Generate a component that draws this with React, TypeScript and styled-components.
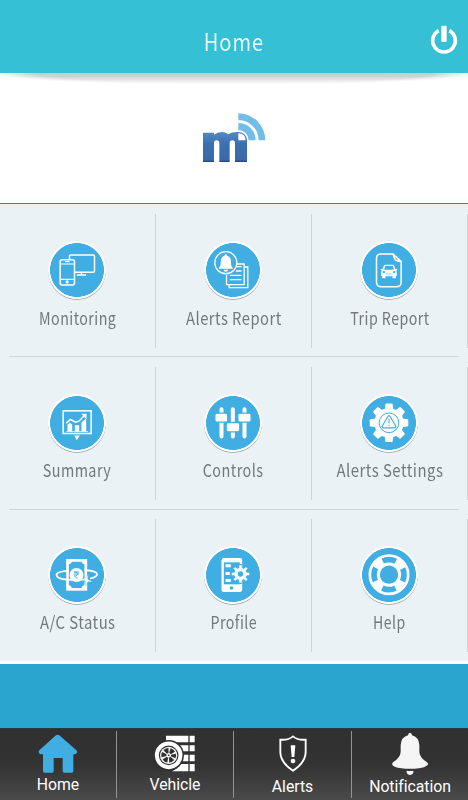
import React from 'react';
import styled, { createGlobalStyle } from 'styled-components';

const GlobalStyle = createGlobalStyle`
  * { box-sizing: border-box; }
  body { margin: 0; background: #fff; }
`;

const labelFont = '"Noto Sans CJK JP", "Noto Sans", sans-serif';

const Screen = styled.div`
  width: 468px;
  height: 800px;
  display: flex;
  flex-direction: column;
  overflow: hidden;
  background: #fff;
`;

const Header = styled.header`
  flex: 0 0 73px;
  display: grid;
  grid-template-columns: 60px 1fr 60px;
  align-items: center;
  background: #35c0d6;
`;

const Title = styled.h1`
  grid-column: 2;
  margin: 8px 0 0;
  text-align: center;
  font: 350 24.5px/30px ${labelFont};
  letter-spacing: 1.2px;
  transform: scaleX(0.825);
  color: #f4feff;
`;

const PowerButton = styled.button`
  margin: 7px 0 0 20px;
  padding: 0;
  width: 32px;
  height: 32px;
  border: 0;
  background: none;
`;

const Brand = styled.section`
  flex: 0 0 131px;
  display: flex;
  flex-direction: column;
  align-items: center;
  border-bottom: 1px solid #4f7991;
`;

const HeaderShade = styled.div`
  width: 100%;
  height: 12px;
  margin-bottom: 27px;
  background: linear-gradient(#c9c9c9 0%, #d2d2d2 30%, #ededed 65%, #fff 100%);
  mask-image: radial-gradient(ellipse 50% 100% at 50% 0, #000 85%, transparent 103%);
`;

const BrandSvg = styled.svg`
  flex: none;
  margin-left: 2px;
`;

const Grid = styled.main`
  flex: 0 0 457px;
  display: grid;
  grid-template-columns: repeat(3, 156px);
  grid-template-rows: 153px 152px 152px;
  background: #eaf2f6;
  background-image: linear-gradient(#cfd7d9, #cfd7d9), linear-gradient(#cfd7d9, #cfd7d9);
  background-size: 450px 1px, 450px 1px;
  background-position: 9px 152px, 9px 305px;
  background-repeat: no-repeat;
`;

const Disc = styled.span`
  display: flex;
  flex: 0 0 60px;
  width: 60px;
  height: 60px;
  margin-right: 1px;
  border-radius: 50%;
  background: radial-gradient(circle at center, #40aee3 26.6px, #fff 27.2px, #fff 28.5px, transparent 29.2px);
  filter: drop-shadow(0 1px 0.6px #a2a8acd0);
`;

const TileLabel = styled.span<{ $stretch: number }>`
  margin-top: 3px;
  font: 400 17.6px/28px ${labelFont};
  letter-spacing: 0.55px;
  transform: scaleX(${(p) => p.$stretch});
  white-space: nowrap;
  color: #74787a;
`;

const Tile = styled.button`
  display: flex;
  flex-direction: column;
  align-items: center;
  margin: 10px 0 9px;
  padding: 26px 0 0;
  border: 0;
  border-right: 1px solid #cbd3d5;
  background: none;
  &:nth-child(-n + 3) ${TileLabel} { margin-top: 4px; }
`;

const Banner = styled.div`
  flex: 0 0 67px;
  border-top: 3px solid #fbfdfe;
  background: #29a5d0;
`;

const Nav = styled.nav`
  flex: 0 0 72px;
  display: grid;
  grid-template-columns: 117px 117px 118px 116px;
  padding-top: 2px;
  border-top: 1px solid #253c45;
  background: linear-gradient(#303030 0%, #333 50%, #4a4a4a 100%);
`;

const NavItem = styled.a`
  display: flex;
  flex-direction: column;
  align-items: center;
  height: 67px;
  border-right: 1px solid #939393;
  &:last-child { border-right: 0; }
`;

const NavSvg = styled.svg`
  flex: 0 0 45px;
`;

const NavLabel = styled.span<{ $lower?: boolean }>`
  margin-top: ${(p) => (p.$lower ? 1 : -1)}px;
  font: 400 15.8px/20px Roboto, sans-serif;
  letter-spacing: -0.05px;
  color: #fff;
`;

const gearPath = (cx: number, cy: number, outer: number, inner: number, tip: number, root: number) => {
  const points: string[] = [];
  for (let i = 0; i < 8; i++) {
    const a = (i * Math.PI) / 4 - Math.PI / 2;
    for (const [r, d] of [[inner, -root], [outer, -tip], [outer, tip], [inner, root]]) {
      points.push(`${(cx + r * Math.cos(a + d)).toFixed(2)},${(cy + r * Math.sin(a + d)).toFixed(2)}`);
    }
  }
  return `M${points.join('L')}Z`;
};

const BLUE = '#40aee3';

const bell = 'M138 74c-3 0-4 2-4 4-8 2-11 9-11 16 0 12-2 17-6 21v2h42v-2c-4-4-6-9-6-21 0-7-3-14-11-16 0-2-1-4-4-4Z';

const Monitoring = () => (
  <g fill="none" stroke="#fff" strokeWidth="4.4">
    <path d="M119 88V80q0-4 4-4h67q4 0 4 4v44q0 4-4 4h-55" />
    <path d="M155 129v6M141 136h28" />
    <rect x="91" y="90" width="43" height="76" rx="6" />
    <path d="M92 103h41M92 149h41M106 96h13" strokeWidth="3.4" />
    <path d="M112 152v10M107 157h10" strokeWidth="4" />
  </g>
);

const AlertsReport = () => (
  <g fill="none" stroke="#fff" strokeWidth="3.9">
    <path d="M148 165v9h56v-62h-9" />
    <path d="M169 103h24v62h-53v-30" />
    <path d="M165 111h20M168 124h17M150 137h35M150 150h35" />
    <circle cx="138" cy="99" r="33" fill={BLUE} />
    <path d={bell} fill="#fff" stroke="none" />
    <path d="M131 120h14q-1 6-7 6t-7-6Z" fill="#fff" stroke="none" />
  </g>
);

const TripReport = () => (
  <g>
    <path d="M190 73h-37q-13 0-13 13v72q0 13 13 13h48q13 0 13-13V96ZM190 73q3 13 7 18 7 4 17 5" fill="none" stroke="#fff" strokeWidth="4.6" strokeLinejoin="round" />
    <path fillRule="evenodd" fill="#fff" d="M162 108q1-3 5-3h21q4 0 5 3l4 11 4-2 2 3-4 3q2 2 2 5v11h-3v7h-10v-6h-21v6h-10v-7h-3v-11q0-3 2-5l-4-3 2-3 4 2ZM166 109l-3 11h29l-3-11ZM158 127a4 3 0 1 0 8 0 4 3 0 1 0-8 0M189 127a4 3 0 1 0 8 0 4 3 0 1 0-8 0M167 132v2h21v-2Z" />
  </g>
);

const Summary = () => (
  <g fill="#fff">
    <rect x="100" y="77" width="84" height="68" fill="none" stroke="#fff" strokeWidth="4.6" />
    <path d="M113 119l7-6 7 5v21h-14ZM135 120h13v19h-13ZM155 111l14-11v39h-14Z" />
    <path d="M109 114l13-11 15 8 10-3 17-17" fill="none" stroke="#fff" strokeWidth="4.4" />
    <path d="M154 86h16v16ZM133 151h17l-9 14Z" />
    <path d="M109 139h66" stroke="#fff" strokeWidth="2" />
  </g>
);

const Controls = () => (
  <g>
    <path d="M125 72v82M159 72v82M194 72v82" fill="none" stroke="#fff" strokeWidth="12" strokeLinecap="round" />
    <g fill="#fff" stroke={BLUE} strokeWidth="4">
      <rect x="105" y="84" width="39" height="27" rx="6" />
      <rect x="139" y="112" width="41" height="28" rx="6" />
      <rect x="174" y="84" width="40" height="27" rx="6" />
    </g>
  </g>
);

const AlertsSettings = () => (
  <g>
    <path d={gearPath(177.5, 113, 56, 42, 0.15, 0.25)} fill="#fff" stroke="#fff" strokeWidth="5" strokeLinejoin="round" />
    <circle cx="177.5" cy="113" r="29.5" fill="none" stroke={BLUE} strokeWidth="3" />
    <path d="M174 94q3-5 7 0l17 29q2 5-4 5h-33q-6 0-4-5Z" fill="none" stroke={BLUE} strokeWidth="3.4" />
    <path d="M177.5 101v14M177.5 119v4" stroke={BLUE} strokeWidth="3" />
  </g>
);

const AccountStatus = () => (
  <g>
    <path d="M109 72h63v95h-63Z" fill="#fff" />
    <path d="M126 80h29q1 6 9 8v62q-8 2-9 9h-29q-2-7-9-9V88q8-2 9-8Z" fill={BLUE} />
    <path d="M117 107q-36 3-37 12 0 12 33 15 31 3 51-1M164 105q37 3 38 13 0 8-22 13" fill="none" stroke="#fff" strokeWidth="5.5" />
    <path d="M162 134l14-13-3 11 15 9-14-1-6 12-1-12Z" fill="#fff" stroke={BLUE} strokeWidth="1" />
    <circle cx="140" cy="120" r="21" fill="#fff" />
    <path d="M132 111h16M132 117h16M134 111c13 0 13 12 0 12l9 8" fill="none" stroke={BLUE} strokeWidth="3" />
  </g>
);

const Profile = () => (
  <g>
    <path d="M132 69h48q7 0 7 7v87q0 8-7 8h-48q-7 0-7-8V76q0-7 7-7Z" fill="#fff" />
    <path d="M132 82h48v66h-48Z" fill={BLUE} />
    <path d="M137 88h16v9h-16ZM137 111h13v9h-13ZM137 132h16v9h-16Z" fill="#fff" />
    <path d="M146 75h20" stroke="#d8eef9" strokeWidth="2" />
    <circle cx="155" cy="159" r="5.5" fill={BLUE} />
    <path d={gearPath(182, 117, 30, 21, 0.13, 0.21)} fill={BLUE} />
    <path d={gearPath(182, 117, 26, 18, 0.13, 0.2)} fill="#fff" stroke="#fff" strokeWidth="1" strokeLinejoin="round" />
    <circle cx="182" cy="117" r="8" fill={BLUE} />
  </g>
);

const Help = () => (
  <g fill="none">
    <circle cx="177.5" cy="119" r="59" stroke="#fff" strokeWidth="5" />
    <circle cx="177.5" cy="119" r="43" stroke="#fff" strokeWidth="31" />
    <circle cx="177.5" cy="119" r="45" stroke={BLUE} strokeWidth="17" pathLength="360" strokeDasharray="52 38" strokeDashoffset="26" />
  </g>
);

const tiles = [
  { label: 'Monitoring', stretch: 0.81, origin: '51.5 31', Icon: Monitoring },
  { label: 'Alerts Report', stretch: 0.84, origin: '69.5 31', Icon: AlertsReport },
  { label: 'Trip Report', stretch: 0.81, origin: '87.5 31', Icon: TripReport },
  { label: 'Summary', stretch: 0.815, origin: '51.5 23.5', Icon: Summary },
  { label: 'Controls', stretch: 0.82, origin: '69.5 23.5', Icon: Controls },
  { label: 'Alerts Settings', stretch: 0.85, origin: '87.5 23.5', Icon: AlertsSettings },
  { label: 'A/C Status', stretch: 0.845, origin: '51.5 30', Icon: AccountStatus },
  { label: 'Profile', stretch: 0.81, origin: '69.5 30', Icon: Profile },
  { label: 'Help', stretch: 0.8, origin: '87.5 30', Icon: Help },
];

const HomeIcon = () => (
  <path d="M173 59q3 0 5 2l51 45q4 4 1 8-2 4-7 4h-3v50q0 5-5 5h-22q-5 0-5-5v-39h-27v39q0 5-5 5h-22q-5 0-5-5v-50h-5q-5 0-7-4t1-8l50-45q2-2 5-2Z" fill="#40aee3" />
);

const VehicleIcon = () => (
  <g>
    <path d="M499 62h67v20h-67ZM570 62h15v20h-15ZM535 91h31v18h-31ZM570 91h15v18h-15ZM550 119h16v20h-16ZM570 119h15v20h-15ZM517 169q18-8 23-22h26v22ZM570 147h15v22h-15Z" fill="#fff" />
    <circle cx="507" cy="121" r="46" fill="#303030" />
    <circle cx="507" cy="121" r="35.5" fill="none" stroke="#fff" strokeWidth="12" />
    <circle cx="507" cy="121" r="26" fill="#f4f4f4" />
    <circle cx="507" cy="121" r="14.5" fill="none" stroke="#303030" strokeWidth="15" pathLength="360" strokeDasharray="43 17" strokeDashoffset="20" />
    <circle cx="507" cy="121" r="2.5" fill="#303030" />
  </g>
);

const ShieldIcon = () => (
  <g>
    <path d="M876 64q-14 12-38 10v39q2 31 38 54 36-23 38-54V74q-24 2-38-10Z" fill="none" stroke="#fff" strokeWidth="5.5" />
    <path d="M869 91h14l-3 35h-8Z" fill="#fff" />
    <circle cx="876" cy="138" r="7" fill="#fff" />
  </g>
);

const BellIcon = () => (
  <g fill="#f5f5f5">
    <path d="M1230 53q5 0 6 8 20 5 22 29v22q2 17 22 29 7 5 2 10-8 7-25 9-27 3-53 0-16-2-24-7-7-6 0-12 21-13 22-30V90q2-24 22-29 1-8 6-8Z" />
    <path d="M1220 167q10 2 20 0v6q-3 7-10 7t-10-7Z" />
  </g>
);

const navItems = [
  { label: 'Home', view: '102 48 144 135', Icon: HomeIcon },
  { label: 'Vehicle', view: '454 48 144 135', Icon: VehicleIcon },
  { label: 'Alerts', view: '804 48 144 135', Icon: ShieldIcon, lower: true },
  { label: 'Notification', view: '1158 48 144 135', Icon: BellIcon, lower: true },
];

const BrandMark = () => (
  <BrandSvg width="66" height="52" viewBox="66 36 198 156" aria-label="m">
    <defs>
      <linearGradient id="mark" x1="0" y1="0" x2="0" y2="1">
        <stop offset="0" stopColor="#5189c5" />
        <stop offset="0.4" stopColor="#3b70b0" />
        <stop offset="0.93" stopColor="#3b69a8" />
        <stop offset="1" stopColor="#233f7c" />
      </linearGradient>
    </defs>
    <path d="M69 98h33v6q21-16 44-1 9-8 29-7 22 0 26 24v66h-36v-57q0-8-8-8t-8 8v57h-31v-57q0-8-8-8t-8 8v57H69Z" fill="url(#mark)" />
    <path d="M175 100v21h22q0-20-22-21Z" fill="#fff" />
    <path d="M175 40a81 81 0 0 1 81 81h-20a61 61 0 0 0-61-61ZM175 69a52 52 0 0 1 52 52h-21a31 31 0 0 0-31-31Z" fill="#72bce9" />
  </BrandSvg>
);

export default function App() {
  return (
    <Screen>
      <GlobalStyle />
      <Header>
        <Title>Home</Title>
        <PowerButton aria-label="Log out">
          <svg width="32" height="32" viewBox="1283 73 96 96">
            <path d="M1315 93a34 34 0 1 0 32 0" fill="none" stroke="#fff" strokeWidth="11" />
            <rect x="1323" y="78" width="16" height="49" rx="3" fill="#fff" />
          </svg>
        </PowerButton>
      </Header>
      <Brand>
        <HeaderShade />
        <BrandMark />
      </Brand>
      <Grid>
        {tiles.map(({ label, stretch, origin, Icon }) => (
          <Tile key={label}>
            <Disc>
              <svg width="60" height="60" viewBox={`${origin} 180 180`}><Icon /></svg>
            </Disc>
            <TileLabel $stretch={stretch}>{label}</TileLabel>
          </Tile>
        ))}
      </Grid>
      <Banner />
      <Nav>
        {navItems.map(({ label, view, Icon, lower }) => (
          <NavItem key={label}>
            <NavSvg width="48" height="45" viewBox={view}><Icon /></NavSvg>
            <NavLabel $lower={lower}>{label}</NavLabel>
          </NavItem>
        ))}
      </Nav>
    </Screen>
  );
}
